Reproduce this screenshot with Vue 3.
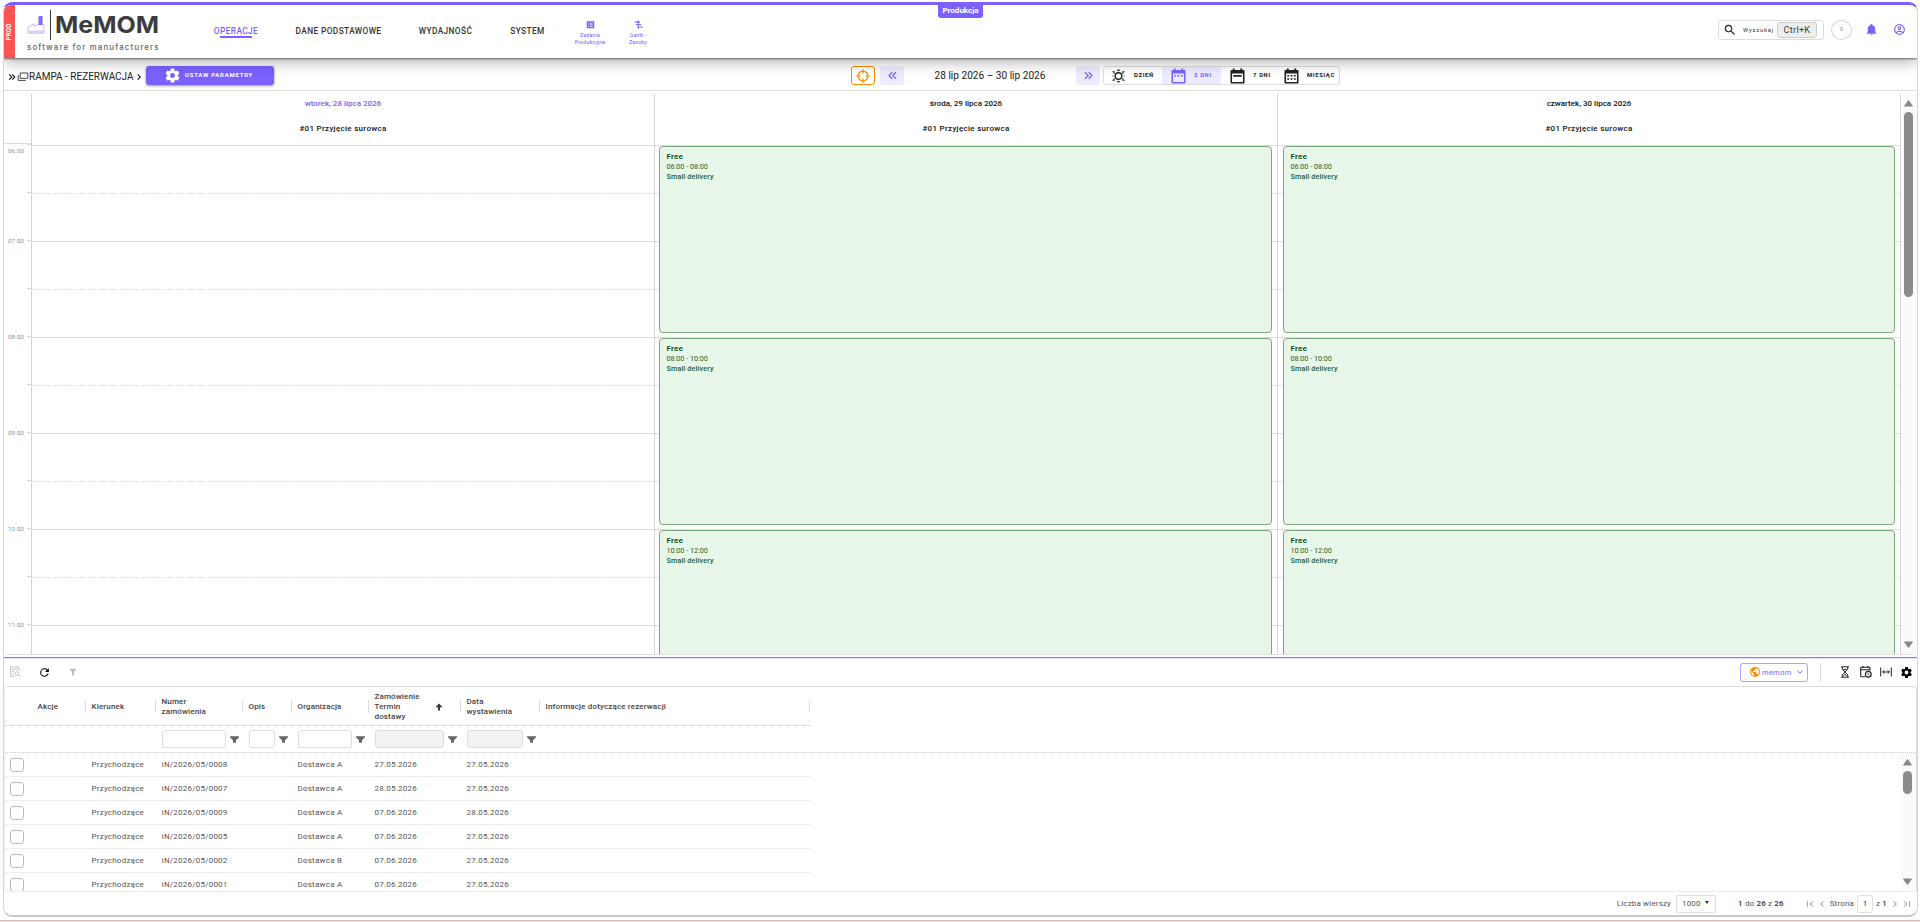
<template>
  <div class="page">
    <div class="app">
      <header class="header">
        <div class="env"><span>PROD</span></div>
        <div class="logo">
          <div class="logo-top">
            <svg class="factory" viewBox="0 0 17 20">
              <path d="M.5 18.3V12l6-3v2.500l4-2h6v8.800z" fill="#fff" stroke="#b9acff" stroke-width=".8" />
              <path d="M.5 15.500h16v2.800H.5z" fill="#d9d2ff" />
              <path d="M11 10V2.300L12 1h3v9z" fill="#7b61ff" />
              <path d="M12.500 1v9" stroke="#a596ff" stroke-width=".6" />
            </svg>
            <span class="logo-bar"></span>
            <svg class="logo-name" viewBox="0 0 106 30">
              <text x="0" y="23" textLength="104" lengthAdjust="spacingAndGlyphs">MeMOM</text>
            </svg>
          </div>
          <div class="logo-sub">software for manufacturers</div>
        </div>
        <nav class="nav">
          <a
            v-for="item in menu"
            :key="item.label"
            class="nav-item"
            :class="[item.size, { active: item.active }]"
          >{{ item.label }}</a>
        </nav>
        <div class="shortcuts">
          <a class="shortcut">
            <svg viewBox="0 0 24 24"><path fill-rule="evenodd" :d="icons.tasks" /></svg>
            <span>Zadania<br />Produkcyjne</span>
          </a>
          <a class="shortcut">
            <svg viewBox="0 0 24 24"><path :d="icons.gantt" /></svg>
            <span>Gantt -<br />Zasoby</span>
          </a>
        </div>
        <div class="header-right">
          <div class="search">
            <svg class="search-icon" viewBox="0 0 24 24"><path :d="icons.magnify" /></svg>
            <span class="search-text">Wyszukaj</span>
            <kbd>Ctrl+K</kbd>
          </div>
          <div class="counter">0</div>
          <svg class="bell" viewBox="0 0 24 24"><path :d="icons.bell" /></svg>
          <svg class="account" viewBox="0 0 24 24"><path :d="icons.account" /></svg>
        </div>
        <div class="badge">Produkcja</div>
      </header>

      <div class="toolbar">
        <div class="crumbs">
          <svg class="crumb-arrows" viewBox="0 0 24 24"><path :d="icons.doubleRight" /></svg>
          <svg class="crumb-window" viewBox="0 0 12 10">
            <path d="M3.200 1h7.600v5.300H3.200zM1.200 3v5.400h7.600" fill="none" stroke="#444" stroke-width="1" />
          </svg>
          <span class="crumb-title">RAMPA - REZERWACJA</span>
          <svg class="crumb-next" viewBox="0 0 24 24"><path :d="icons.right" /></svg>
          <button class="params">
            <svg viewBox="0 0 24 24"><path :d="icons.cog" /></svg>
            <span>USTAW PARAMETRY</span>
          </button>
        </div>
        <div class="range">
          <button class="now">
            <svg viewBox="0 0 24 24" fill="none" stroke="#fb8c00" stroke-width="2">
              <circle cx="12" cy="12" r="8.500" />
              <path d="M12 .5V8M12 16v7.500M.5 12H8M16 12h7.500" />
            </svg>
          </button>
          <button class="step prev">
            <svg viewBox="0 0 24 24"><path :d="icons.doubleLeft" /></svg>
          </button>
          <span class="range-title">28 lip 2026 – 30 lip 2026</span>
          <button class="step">
            <svg viewBox="0 0 24 24"><path :d="icons.doubleRight" /></svg>
          </button>
          <div class="views">
            <button v-for="v in views" :key="v.label" class="view" :class="['view-' + v.name, { active: v.active }]">
              <svg v-if="v.name === 'day'" viewBox="0 0 16 16" fill="none" stroke="currentColor">
                <circle cx="8" cy="8" r="3.500" stroke-width="1.500" />
                <path d="M6.300 2.300L8 .8l1.700 1.500zM6.300 13.700L8 15.200l1.700-1.500z" fill="currentColor" stroke-width=".4" />
                <path d="M1.500 3.500h1.800v2M14.500 3.500h-1.800v2M1.500 12.500h1.800v-2M14.500 12.500h-1.800v-2M1.500 8h1M13.500 8h1" stroke-width="1.200" />
              </svg>
              <svg v-else viewBox="0 0 16 16" fill="currentColor">
                <path fill-rule="evenodd" d="M3 0h2v1.500h6V0h2v1.500h1.500q1 0 1 1V15q0 1-1 1h-13q-1 0-1-1V2.500q0-1 1-1H3zM2.200 5.300v9h11.600v-9z" />
                <path :d="v.marks" />
              </svg>
              <span>{{ v.label }}</span>
            </button>
          </div>
        </div>
      </div>

      <section class="calendar">
        <div class="gutter">
          <div class="gutter-head"></div>
          <div v-for="(hour, i) in hours" :key="hour" class="gutter-hour" :class="{ first: i === 0 }">
            <span>{{ hour }}</span>
          </div>
        </div>
        <div v-for="day in days" :key="day.title" class="day">
          <div class="day-head" :class="{ today: day.today }">
            <div class="day-title">{{ day.title }}</div>
            <div class="day-resource">#01 Przyjęcie surowca</div>
          </div>
          <div class="day-body">
            <div class="lines">
              <div v-for="n in 6" :key="n" class="line"><i></i></div>
            </div>
            <div class="events">
              <div v-for="slot in day.slots" :key="slot" class="event">
                <b>Free</b>
                <span class="event-time">{{ slot }}</span>
                <span>Small delivery</span>
              </div>
            </div>
          </div>
        </div>
        <div class="scroll">
          <svg class="arrow" viewBox="0 0 9 7"><path d="M.3 6.500Q0 6 .4 5.400L4 .6q.5-.6 1 0l3.600 4.800q.4.6 0 1.100z" /></svg>
          <div class="thumb"></div>
          <svg class="arrow down" viewBox="0 0 9 7"><path d="M.3.5Q0 1 .4 1.600L4 6.400q.5.6 1 0l3.600-4.800Q9 1 8.700.5z" /></svg>
        </div>
      </section>

      <section class="grid">
        <div class="grid-tools">
          <svg class="tool-details" viewBox="0 0 12 12" fill="none" stroke="#bdbdbd">
            <path d="M5.500 10.500h-5v-10h9V5M2 3h6M2 5.300h3M2 8h2" />
            <circle cx="7.700" cy="7.700" r="2" />
            <path d="M9.200 9.200l2.300 2.300" />
          </svg>
          <svg class="tool-refresh" viewBox="0 0 24 24"><path :d="icons.refresh" /></svg>
          <svg class="tool-filter" viewBox="0 0 8 8"><path d="M1 .7h6v1L5 4v3.500H3V4L1 1.700z" /></svg>
          <span class="spacer"></span>
          <button class="tenant">
            <svg class="earth" viewBox="0 0 24 24"><path :d="icons.earth" /></svg>
            <span>memom</span>
            <svg class="tenant-down" viewBox="0 0 8 8"><path d="M1.500 2.800L4 5.200l2.500-2.400" fill="none" stroke="#7b61ff" /></svg>
          </button>
          <span class="divider"></span>
          <svg class="tool-hourglass" viewBox="0 0 8 12" fill="none" stroke="#222">
            <path d="M0 .8h8M0 11.200h8M1.300 1v2.200L4 6l2.700-2.800V1M1.300 11V8.800L4 6l2.700 2.800V11M2.500 3.500h3M2.500 9.500L4 8.500l1.500 1" />
          </svg>
          <svg class="tool-calendar" viewBox="0 0 12 12" fill="none" stroke="#222">
            <path d="M5 10.800H1.500q-.8 0-.8-.8V2q0-.7.8-.7h7.700q.8 0 .8.700v2.500M1 3.800h9M3 0v2M7.700 0v2" stroke-width="1.100" />
            <circle cx="8.300" cy="8.300" r="2.900" stroke-width="1.200" />
            <path d="M8.200 6.700v1.800l1.300.7" stroke-width=".8" />
          </svg>
          <svg class="tool-width" viewBox="0 0 12 10" fill="none" stroke="#222">
            <path d="M.7.5v9M11.300.5v9M2.500 5h7M4.300 3.300L2.600 5l1.700 1.700M7.700 3.300L9.400 5 7.700 6.700" />
          </svg>
          <svg class="tool-cog" viewBox="0 0 24 24"><path :d="icons.cog" /></svg>
        </div>

        <div class="table">
          <div class="row head">
            <div class="cell check"></div>
            <div v-for="col in columns" :key="col.key" class="cell" :class="col.key">
              <span>{{ col.label }}</span>
              <svg v-if="col.sorted" class="sort" viewBox="0 0 8 8"><path d="M4 .5l3.500 3.800H5V7.500H3V4.300H.5z" /></svg>
            </div>
          </div>
          <div class="row filters">
            <div class="cell check"></div>
            <div v-for="col in columns" :key="col.key" class="cell" :class="col.key">
              <template v-if="col.filter">
                <span class="input" :class="{ disabled: col.disabled }"></span>
                <svg class="funnel" viewBox="0 0 9 7"><path d="M0 .3h9v1L6 4.300v2.400H3V4.300L0 1.300z" /></svg>
              </template>
            </div>
          </div>
          <div class="body">
            <div class="rows">
              <div v-for="row in rows" :key="row.number" class="row">
                <div class="cell check"><span class="box"></span></div>
                <div v-for="col in columns" :key="col.key" class="cell" :class="col.key">{{ row[col.key] }}</div>
              </div>
            </div>
            <div class="scroll">
              <svg class="arrow" viewBox="0 0 9 7"><path d="M.3 6.500Q0 6 .4 5.400L4 .6q.5-.6 1 0l3.600 4.800q.4.6 0 1.100z" /></svg>
              <div class="thumb"></div>
              <svg class="arrow down" viewBox="0 0 9 7"><path d="M.3.5Q0 1 .4 1.600L4 6.400q.5.6 1 0l3.600-4.800Q9 1 8.700.5z" /></svg>
            </div>
          </div>
        </div>

        <footer class="pager">
          <span>Liczba wierszy</span>
          <span class="page-size">1000 <i></i></span>
          <span class="summary"><b>1</b> do <b>26</b> z <b>26</b></span>
          <svg class="page-icon first" viewBox="0 0 24 24"><path :d="icons.pageFirst" /></svg>
          <svg class="page-icon" viewBox="0 0 24 24"><path :d="icons.left" /></svg>
          <span class="page-label">Strona</span>
          <span class="page-input">1</span>
          <span class="page-total">z <b>1</b></span>
          <svg class="page-icon" viewBox="0 0 24 24"><path :d="icons.right" /></svg>
          <svg class="page-icon last" viewBox="0 0 24 24"><path :d="icons.pageLast" /></svg>
        </footer>
      </section>
    </div>
    <div class="strip"></div>
  </div>
</template>

<script setup>
const menu = [
  { label: 'OPERACJE', size: 'm1', active: true },
  { label: 'DANE PODSTAWOWE', size: 'm2' },
  { label: 'WYDAJNOŚĆ', size: 'm3' },
  { label: 'SYSTEM', size: 'm4' }
]

const views = [
  { name: 'day', label: 'DZIEŃ' },
  { name: 'three', label: '3 DNI', active: true, marks: 'M3.500 7h2v1.500h-2zM7 7h2v1.500H7zM10.500 7h2v1.500h-2z' },
  { name: 'week', label: '7 DNI', marks: 'M3.500 7h9v1.800h-9z' },
  { name: 'month', label: 'MIESIĄC', marks: 'M3.500 7h2v1.500h-2zM7 7h2v1.500H7zM10.500 7h2v1.500h-2zM3.500 10.500h2V12h-2zM7 10.500h2V12H7zM10.500 10.500h2V12h-2z' }
]

const hours = ['06:00', '07:00', '08:00', '09:00', '10:00', '11:00']
const slots = ['06:00 - 08:00', '08:00 - 10:00', '10:00 - 12:00']

const days = [
  { title: 'wtorek, 28 lipca 2026', today: true, slots: [] },
  { title: 'środa, 29 lipca 2026', slots },
  { title: 'czwartek, 30 lipca 2026', slots }
]

const columns = [
  { key: 'actions', label: 'Akcje' },
  { key: 'direction', label: 'Kierunek' },
  { key: 'number', label: 'Numer zamówienia', filter: true },
  { key: 'desc', label: 'Opis', filter: true },
  { key: 'org', label: 'Organizacja', filter: true },
  { key: 'due', label: 'Zamówienie Termin dostawy', filter: true, disabled: true, sorted: true },
  { key: 'issued', label: 'Data wystawienia', filter: true, disabled: true },
  { key: 'info', label: 'Informacje dotyczące rezerwacji' }
]

const order = (number, org, due, issued) => ({ direction: 'Przychodzące', number, org, due, issued })

const rows = [
  order('IN/2026/05/0008', 'Dostawca A', '27.05.2026', '27.05.2026'),
  order('IN/2026/05/0007', 'Dostawca A', '28.05.2026', '27.05.2026'),
  order('IN/2026/05/0009', 'Dostawca A', '07.06.2026', '28.05.2026'),
  order('IN/2026/05/0005', 'Dostawca A', '07.06.2026', '27.05.2026'),
  order('IN/2026/05/0002', 'Dostawca B', '07.06.2026', '27.05.2026'),
  order('IN/2026/05/0001', 'Dostawca A', '07.06.2026', '27.05.2026')
]

const icons = {
  cog: 'M12,15.5A3.5,3.5 0 0,1 8.5,12A3.5,3.5 0 0,1 12,8.5A3.5,3.5 0 0,1 15.5,12A3.5,3.5 0 0,1 12,15.5M19.43,12.97C19.47,12.65 19.5,12.33 19.5,12C19.5,11.67 19.47,11.34 19.43,11L21.54,9.37C21.73,9.22 21.78,8.95 21.66,8.73L19.66,5.27C19.54,5.05 19.27,4.96 19.05,5.05L16.56,6.05C16.04,5.66 15.5,5.32 14.87,5.07L14.5,2.42C14.46,2.18 14.25,2 14,2H10C9.75,2 9.54,2.18 9.5,2.42L9.13,5.07C8.5,5.32 7.96,5.66 7.44,6.05L4.95,5.05C4.73,4.96 4.46,5.05 4.34,5.27L2.34,8.73C2.21,8.95 2.27,9.22 2.46,9.37L4.57,11C4.53,11.34 4.5,11.67 4.5,12C4.5,12.33 4.53,12.65 4.57,12.97L2.46,14.63C2.27,14.78 2.21,15.05 2.34,15.27L4.34,18.73C4.46,18.95 4.73,19.03 4.95,18.95L7.44,17.94C7.96,18.34 8.5,18.68 9.13,18.93L9.5,21.58C9.54,21.82 9.75,22 10,22H14C14.25,22 14.46,21.82 14.5,21.58L14.87,18.93C15.5,18.67 16.04,18.34 16.56,17.94L19.05,18.95C19.27,19.03 19.54,18.95 19.66,18.73L21.66,15.27C21.78,15.05 21.73,14.78 21.54,14.63L19.43,12.97Z',
  magnify: 'M9.5,3A6.5,6.5 0 0,1 16,9.5C16,11.11 15.41,12.59 14.44,13.73L14.71,14H15.5L20.5,19L19,20.5L14,15.5V14.71L13.73,14.44C12.59,15.41 11.11,16 9.5,16A6.5,6.5 0 0,1 3,9.5A6.5,6.5 0 0,1 9.5,3M9.5,5C7,5 5,7 5,9.5C5,12 7,14 9.5,14C12,14 14,12 14,9.5C14,7 12,5 9.5,5Z',
  bell: 'M21,19V20H3V19L5,17V11C5,7.9 7.03,5.17 10,4.29C10,4.19 10,4.1 10,4A2,2 0 0,1 12,2A2,2 0 0,1 14,4C14,4.1 14,4.19 14,4.29C16.97,5.17 19,7.9 19,11V17L21,19M14,21A2,2 0 0,1 12,23A2,2 0 0,1 10,21',
  account: 'M12,2A10,10 0 0,0 2,12A10,10 0 0,0 12,22A10,10 0 0,0 22,12A10,10 0 0,0 12,2M7.07,18.28C7.5,17.38 10.12,16.5 12,16.5C13.88,16.5 16.5,17.38 16.93,18.28C15.57,19.36 13.86,20 12,20C10.14,20 8.43,19.36 7.07,18.28M18.36,16.83C16.93,15.09 13.46,14.5 12,14.5C10.54,14.5 7.07,15.09 5.64,16.83C4.62,15.5 4,13.82 4,12C4,7.59 7.59,4 12,4C16.41,4 20,7.59 20,12C20,13.82 19.38,15.5 18.36,16.83M12,6C10.06,6 8.5,7.56 8.5,9.5C8.5,11.44 10.06,13 12,13C13.94,13 15.5,11.44 15.5,9.5C15.5,7.56 13.94,6 12,6M12,11A1.5,1.5 0 0,1 10.5,9.5A1.5,1.5 0 0,1 12,8A1.5,1.5 0 0,1 13.5,9.5A1.5,1.5 0 0,1 12,11Z',
  refresh: 'M17.65,6.35C16.2,4.9 14.21,4 12,4A8,8 0 0,0 4,12A8,8 0 0,0 12,20C15.73,20 18.84,17.45 19.73,14H17.65C16.83,16.33 14.61,18 12,18A6,6 0 0,1 6,12A6,6 0 0,1 12,6C13.66,6 15.14,6.69 16.22,7.78L13,11H20V4L17.65,6.35Z',
  doubleRight: 'M5.59,7.41L7,6L13,12L7,18L5.59,16.59L10.17,12L5.59,7.41M11.59,7.41L13,6L19,12L13,18L11.59,16.59L16.17,12L11.59,7.41Z',
  doubleLeft: 'M18.41,7.41L17,6L11,12L17,18L18.41,16.59L13.83,12L18.41,7.41M12.41,7.41L11,6L5,12L11,18L12.41,16.59L7.83,12L12.41,7.41Z',
  right: 'M8.59,16.58L13.17,12L8.59,7.41L10,6L16,12L10,18L8.59,16.58Z',
  left: 'M15.41,16.58L10.83,12L15.41,7.41L14,6L8,12L14,18L15.41,16.58Z',
  pageFirst: 'M18.41,16.59L13.82,12L18.41,7.41L17,6L11,12L17,18L18.41,16.59M6,6H8V18H6V6Z',
  pageLast: 'M5.59,7.41L10.18,12L5.59,16.59L7,18L13,12L7,6L5.59,7.41M16,6H18V18H16V6Z',
  earth: 'M17.9,17.39C17.64,16.59 16.89,16 16,16H15V13A1,1 0 0,0 14,12H8V10H10A1,1 0 0,0 11,9V7H13A2,2 0 0,0 15,5V4.59C17.93,5.77 20,8.64 20,12C20,14.08 19.2,15.97 17.9,17.39M11,19.93C7.05,19.44 4,16.08 4,12C4,11.38 4.08,10.78 4.21,10.21L9,15V16A2,2 0 0,0 11,18M12,2A10,10 0 0,0 2,12A10,10 0 0,0 12,22A10,10 0 0,0 22,12A10,10 0 0,0 12,2Z',
  tasks: 'M2 3h20v19H2zM6 7.500v2h2v-2zM10 7.500v2h8v-2zM6 12v2h2v-2zM10 12v2h8v-2zM6 16.500v2h2v-2zM10 16.500v2h8v-2z',
  gantt: 'M10 1h2.500v22H10zM2 4h14v3H2zM5 10.500h14v3H5zM9 17h14v3H9z'
}
</script>

<style scoped>
.page {
  display: flex;
  flex-direction: column;
  height: 922px;
  padding: 2px 2px 0 3px;
  box-sizing: border-box;
  overflow: hidden;
  background: #fff;
  font-family: Roboto, "Liberation Sans", sans-serif;
  font-size: 8px;
  color: #222;
}

.page * {
  box-sizing: border-box;
}

.page svg {
  display: block;
  flex: none;
}

button {
  display: flex;
  align-items: center;
  padding: 0;
  border: 0;
  font-family: inherit;
}

.app {
  display: flex;
  flex-direction: column;
  height: 915px;
  flex: none;
  border: 1px solid #d5d5d5;
  border-top: 3px solid #7b61ff;
  border-bottom: 2px solid #c8c8c8;
  border-radius: 9px;
  overflow: hidden;
}

/* header */
.header {
  position: relative;
  z-index: 2;
  display: flex;
  height: 53px;
  flex: none;
  background: #fff;
  box-shadow: 0 1px 2px rgba(0, 0, 0, 0.5), 0 4px 14px rgba(0, 0, 0, 0.3);
}

.env {
  display: flex;
  align-items: center;
  justify-content: center;
  width: 11px;
  background: #ff5252;
  color: #fff;
  font-size: 6.3px;
  font-weight: 700;
}

.env span {
  transform: rotate(-90deg);
}

.logo {
  width: 145px;
  flex: none;
  padding: 5px 0 0 12px;
}

.logo-top {
  display: flex;
  height: 30px;
}

.factory {
  width: 18px;
  height: 20px;
  margin-top: 5px;
}

.logo-bar {
  width: 1px;
  height: 30px;
  flex: none;
  margin: 0 4px 0 5px;
  background: #333;
}

.logo-name {
  width: 106px;
  height: 30px;
  overflow: visible;
}

.logo-name text {
  font: 700 23.5px Inter, sans-serif;
  fill: #3c3c3c;
}

.logo-sub {
  margin-top: 1px;
  font: 500 8px/12px Inter, sans-serif;
  letter-spacing: 1.08px;
  color: #666;
  white-space: nowrap;
}

.nav {
  display: flex;
  align-items: flex-start;
  padding: 19px 0 0 40px;
}

.nav-item {
  display: flex;
  flex-direction: column;
  align-items: center;
  line-height: 14px;
  font-size: 8.3px;
  font-weight: 500;
  letter-spacing: 0.4px;
  color: #333;
  white-space: nowrap;
}

.m1 { width: 72px; }
.m2 { width: 133px; }
.m3 { width: 81px; }
.m4 { width: 83px; }

.nav-item.active {
  color: #7b61ff;
}

.nav-item.active::after {
  content: "";
  width: 32px;
  height: 2px;
  margin-top: -2px;
  background: #7b61ff;
}

.shortcuts {
  display: flex;
  margin-left: -3px;
  padding-top: 15px;
}

.shortcut {
  display: flex;
  flex-direction: column;
  align-items: center;
  width: 48px;
  color: #7b61ff;
  font-size: 5.3px;
  line-height: 7px;
  letter-spacing: 0.15px;
  text-align: center;
}

.shortcut svg {
  width: 9px;
  height: 9px;
  margin-bottom: 3px;
  fill: #7b61ff;
}

.header-right {
  display: flex;
  align-items: flex-start;
  margin-left: auto;
  padding: 15px 11px 0 0;
}

.search {
  display: flex;
  align-items: center;
  width: 106px;
  height: 20px;
  border: 1px solid #ddd;
  border-radius: 3px;
}

.search-icon {
  width: 14px;
  height: 14px;
  margin-left: 4px;
  fill: #222;
}

.search-text {
  width: 34px;
  margin-left: 6px;
  font-size: 5.8px;
  letter-spacing: 0.8px;
  white-space: nowrap;
  color: #333;
}

kbd {
  width: 40px;
  height: 16px;
  border: 1px solid #ccc;
  border-radius: 3px;
  background: #eee;
  color: #444;
  font: 400 9.3px/14px Roboto, sans-serif;
  letter-spacing: 0.2px;
  text-align: center;
}

.counter {
  width: 21px;
  height: 20px;
  margin: 0 0 0 7px;
  border: 1px solid #d5d5d5;
  border-radius: 50%;
  color: #888;
  font-size: 5.5px;
  line-height: 17px;
  text-align: center;
}

.bell {
  width: 13px;
  height: 13px;
  margin: 3px 0 0 13px;
  fill: #7b61ff;
}

.account {
  width: 13px;
  height: 13px;
  margin: 3px 0 0 15px;
  fill: #7b61ff;
}

.badge {
  position: absolute;
  top: 0;
  left: 934px;
  width: 45px;
  height: 13px;
  border-radius: 0 0 3px 3px;
  background: #7b61ff;
  color: #fff;
  font-size: 8px;
  font-weight: 700;
  line-height: 11px;
  text-align: center;
}

/* toolbar */
.toolbar {
  display: flex;
  height: 33px;
  flex: none;
  padding-top: 8px;
  border-bottom: 1px solid #ddd;
}

.crumbs {
  display: flex;
  align-items: center;
  width: 847px;
  height: 19px;
}

.crumb-arrows {
  width: 12px;
  height: 12px;
  margin: 3px 0 0 2px;
}

.crumb-window {
  width: 12px;
  height: 10px;
  margin: 3px 0 0 -1px;
}

.crumb-title {
  width: 105px;
  margin-top: 2px;
  font-size: 10px;
  white-space: nowrap;
}

.crumb-next {
  width: 12px;
  height: 12px;
  margin: 3px 1px 0 -1px;
}

.params {
  width: 128px;
  height: 19px;
  padding-left: 18px;
  border-radius: 3px;
  background: #7b61ff;
  box-shadow: 0 1px 3px rgba(0, 0, 0, 0.4);
  color: #fff;
}

.params svg {
  width: 17px;
  height: 17px;
  fill: #fff;
}

.params span {
  margin: -2px 0 0 4px;
  font-size: 6px;
  font-weight: 700;
  letter-spacing: 0.75px;
  white-space: nowrap;
}

.range {
  display: flex;
  height: 19px;
}

.now,
.step {
  justify-content: center;
  width: 24px;
  height: 19px;
  border-radius: 3px;
}

.range .now {
  border: 1px solid #fb8c00;
  background: #fff;
}

.now svg {
  width: 14px;
  height: 14px;
}

.step {
  background: #efebff;
}

.step svg {
  width: 15px;
  height: 15px;
  fill: #7b61ff;
}

.prev {
  margin-left: 5px;
}

.range-title {
  width: 172px;
  font-size: 10.1px;
  line-height: 19px;
  text-align: center;
}

.views {
  display: flex;
  width: 237px;
  height: 19px;
  margin-left: 3px;
  border: 1px solid #ddd;
  border-radius: 3px;
  background: #fff;
}

.view {
  height: 17px;
  background: transparent;
  color: #222;
}

.view-day { width: 58px; padding-left: 7px; }
.view-three { width: 59px; padding-left: 9px; }
.view-week { width: 54px; padding-left: 9px; }
.view-month { width: 64px; padding-left: 9px; }

.view.active {
  background: #efebff;
  color: #7b61ff;
}

.view svg {
  width: 15px;
  height: 16px;
}

.view span {
  margin: -2px 0 0 8px;
  font-size: 5.9px;
  font-weight: 700;
  letter-spacing: 0.65px;
  white-space: nowrap;
}

/* calendar */
.calendar {
  display: flex;
  height: 561px;
  flex: none;
  margin-top: 3px;
  border-bottom: 1px solid #e0e0e0;
  border-radius: 0 0 5px 5px;
  overflow: hidden;
}

.gutter {
  width: 28px;
  flex: none;
  border-right: 1px solid #d5d5d5;
  overflow: hidden;
}

.gutter-head {
  height: 50px;
  border-bottom: 1px solid #ddd;
}

.gutter-hour {
  display: flex;
  height: 96px;
  background:
    linear-gradient(#d5d5d5, #d5d5d5) right 0 / 4px 1px no-repeat,
    linear-gradient(#d5d5d5, #d5d5d5) right 48px / 4px 1px no-repeat;
}

.gutter-hour span {
  margin: -4px 0 0 4px;
  font-size: 6px;
  line-height: 9px;
  letter-spacing: 0.25px;
  color: #8e8e8e;
}

.gutter-hour.first span {
  margin-top: 2px;
}

.day {
  display: flex;
  flex-direction: column;
  width: 623px;
  flex: none;
  border-right: 1px solid #d5d5d5;
}

.day-head {
  height: 52px;
  flex: none;
  border-bottom: 1px solid #ddd;
  text-align: center;
  font-weight: 500;
  font-size: 8px;
  color: #111;
}

.day-title {
  margin-top: 4px;
  line-height: 11px;
}

.today .day-title {
  color: #7b61ff;
}

.day-resource {
  margin-top: 14px;
  line-height: 11px;
  letter-spacing: 0.3px;
}

.day-body {
  display: grid;
  flex: 1;
  min-height: 0;
  overflow: hidden;
}

.lines,
.events {
  grid-area: 1 / 1;
  min-height: 0;
}

.line {
  height: 96px;
  padding-top: 47px;
  border-bottom: 1px solid #ddd;
}

.line i {
  display: block;
  height: 1px;
  background: repeating-linear-gradient(90deg, #ddd 0 3px, transparent 3px 4px, #ddd 4px 7px, transparent 7px 8.500px, #ddd 8.500px 9.500px, transparent 9.500px 11px);
}

.events {
  z-index: 1;
  padding: 0 5px 0 4px;
}

.day:nth-child(4) .events {
  padding-left: 5px;
}

.event {
  display: flex;
  flex-direction: column;
  height: 187px;
  margin-bottom: 5px;
  padding: 5px 7px 5px 6.5px;
  border: 1px solid #77aa79;
  border-radius: 4px;
  background: #e8f5e9;
  color: #1f5f2c;
  font-size: 7.2px;
  font-weight: 500;
  line-height: 10px;
  letter-spacing: 0.15px;
}

.event b {
  font-size: 8px;
  color: #1b5e20;
}

.event-time {
  font-weight: 400;
  letter-spacing: 0;
}

.scroll {
  display: flex;
  flex-direction: column;
  align-items: center;
  width: 15px;
  margin-left: auto;
  padding: 6px 2px 6px 0;
  background: #fafafa;
}

.arrow {
  width: 9px;
  height: 7px;
  fill: #888;
}

.arrow.down {
  margin-top: auto;
}

.thumb {
  width: 9px;
  height: 185px;
  margin-top: 5px;
  border-radius: 5px;
  background: #8b8b8b;
}

/* orders grid */
.grid {
  display: flex;
  flex-direction: column;
  flex: 1;
  min-height: 0;
  margin-top: 2px;
  border-top: 1px solid #8b75ff;
  box-shadow: inset 0 1px #e3ddff;
}

.grid-tools {
  display: flex;
  align-items: center;
  height: 28px;
  flex: none;
  padding: 0 4px 0 6px;
}

.tool-details { width: 11px; height: 12px; }
.tool-refresh { width: 13px; height: 13px; margin-left: 17px; }
.tool-filter { width: 8px; height: 8px; margin-left: 18px; fill: #bdbdbd; }

.spacer {
  flex: 1;
}

.tenant {
  width: 68px;
  height: 19px;
  padding-left: 8px;
  border: 1px solid #b0a0ff;
  border-radius: 3px;
  background: #fff;
  color: #7b61ff;
  font-size: 7.500px;
  letter-spacing: 0.35px;
}

.earth {
  width: 12px;
  height: 12px;
  margin-right: 1px;
  fill: #fb8c00;
}

.tenant-down {
  width: 8px;
  height: 8px;
  margin-left: 4px;
}

.divider {
  width: 1px;
  height: 19px;
  margin: 0 20px 0 12px;
  background: #ddd;
}

.tool-hourglass { width: 8px; height: 12px; }
.tool-calendar { width: 12px; height: 12px; margin-left: 11px; }
.tool-width { width: 12px; height: 10px; margin-left: 8px; }
.tool-cog { width: 13px; height: 13px; margin-left: 8px; }

.table {
  display: flex;
  flex-direction: column;
  height: 206px;
  flex: none;
  border: 1px solid #ddd;
  border-left-color: #eee;
  border-bottom: 1px solid #eee;
  border-radius: 4px 4px 0 0;
  color: #555;
}

.row {
  display: flex;
  width: 806px;
  height: 24px;
  border-bottom: 1px solid #eee;
}

.cell {
  display: flex;
  align-items: center;
  flex: none;
  padding-left: 5.5px;
  letter-spacing: 0.22px;
  white-space: nowrap;
}

.check { width: 27px; }
.actions { width: 54px; }
.direction { width: 70px; }
.number { width: 87px; }
.desc { width: 49px; }
.org { width: 77px; }
.due { width: 92px; }
.issued { width: 79px; }
.info { width: 270px; }

.row.head {
  height: 39px;
  border-bottom: 1px dotted #ccc;
  background: #fff;
}

.head .cell {
  padding-top: 1px;
  font-weight: 500;
  line-height: 10px;
  letter-spacing: 0.15px;
  color: #444;
  white-space: normal;
}

.head .cell:not(.check) {
  background: linear-gradient(#ddd, #ddd) right center / 1px 12px no-repeat;
}

.head .number span { width: 50px; }
.head .due span { width: 48px; }
.head .issued span { width: 50px; }

.sort {
  width: 8px;
  height: 8px;
  margin-left: 12px;
  fill: #333;
}

.row.filters {
  width: 100%;
  height: 27px;
  border-bottom: 1px dotted #ccc;
}

.input {
  height: 18px;
  flex: 1;
  border: 1px solid #ddd;
  border-radius: 3px;
  background: #fff;
}

.input.disabled {
  background: #f3f3f3;
}

.funnel {
  width: 9px;
  height: 7px;
  margin: 0 4px 0 4px;
  fill: #666;
}

.body {
  display: flex;
  height: 138px;
  overflow: hidden;
}

.box {
  width: 14px;
  height: 14px;
  margin: 1px 0 0 -0.5px;
  border: 1px solid #bbb;
  border-radius: 3px;
}

.body .thumb {
  height: 23px;
}

/* pager */
.pager {
  display: flex;
  align-items: center;
  justify-content: flex-end;
  height: 25px;
  padding-right: 4px;
  color: #555;
  letter-spacing: 0.16px;
}

.pager b {
  font-weight: 500;
  color: #333;
}

.page-size {
  display: flex;
  align-items: center;
  width: 40px;
  height: 18px;
  margin-left: 5px;
  padding-left: 5px;
  border: 1px solid #ddd;
  border-radius: 3px;
}

.page-size i {
  margin: -2px 0 0 4px;
  border: 2.5px solid transparent;
  border-top: 3px solid #333;
  border-bottom: 0;
}

.summary {
  margin: 0 20px 0 22px;
}

.page-icon {
  width: 12px;
  height: 12px;
  fill: #aaa;
}

.page-label {
  margin-left: 2px;
}

.page-input {
  width: 16px;
  height: 18px;
  margin: 0 3px;
  border: 1px solid #ddd;
  border-radius: 3px;
  color: #333;
  line-height: 16px;
  text-align: center;
}

.page-total {
  margin-right: 2px;
}

.strip {
  height: 2px;
  flex: none;
  margin: 3px -2px 0 -3px;
  border-top: 1px solid #c9b8ac;
  background: #f3e3da;
}
</style>

<style>
body {
  margin: 0;
  overflow: hidden;
}
</style>
